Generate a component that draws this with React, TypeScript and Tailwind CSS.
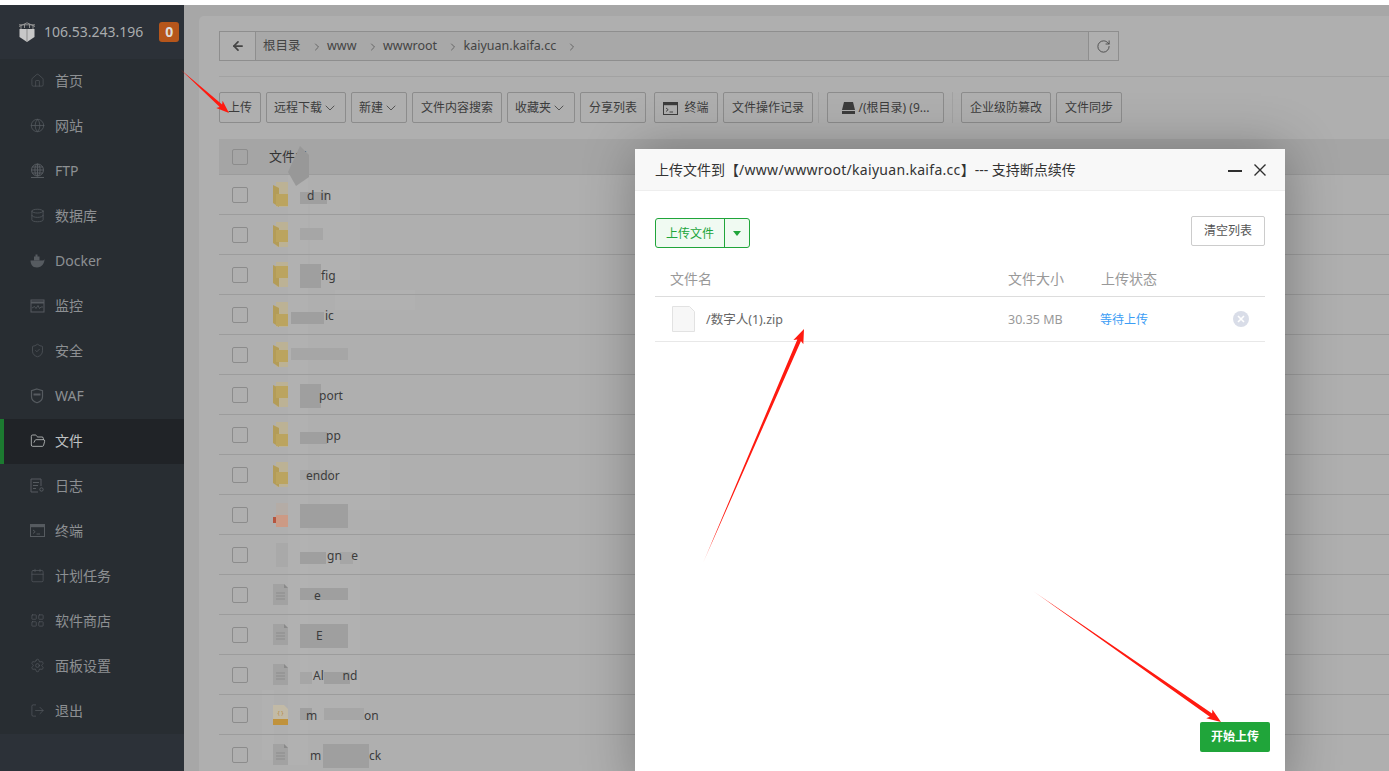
import {
  ArrowLeft,
  Calendar,
  ChevronDown,
  ChevronRight,
  Database,
  FolderOpen,
  Globe,
  Home,
  LayoutGrid,
  LogOut,
  RotateCw,
  Settings,
  ShieldCheck,
} from "lucide-react";

const font = { fontFamily: '"Noto Sans", "Noto Sans CJK SC", sans-serif' };

function FtpIcon() {
  return (
    <svg width="15" height="16" viewBox="0 0 15 16" fill="none" stroke="currentColor" strokeWidth="1">
      <circle cx="7.5" cy="7" r="6" />
      <ellipse cx="7.5" cy="7" rx="2.6" ry="6" />
      <path d="M1.5 7h12M2 4h11M2 10h11M7.5 1v12M1 14.5h13" />
    </svg>
  );
}

function DockerIcon() {
  return (
    <svg width="15" height="15" viewBox="0 0 15 15" fill="currentColor">
      <path d="M.5 7.500h12.500c.8 0 1.400-1 1.500-2 .3 4.500-2.500 9-7.500 9S.7 11 .5 7.500z" />
      <path d="M4 7.500V3.500h1.500V1.500h2v2H9.500v4z" />
    </svg>
  );
}

function MonitorIcon() {
  return (
    <svg width="15" height="14" viewBox="0 0 15 14" fill="none" stroke="currentColor">
      <rect x="1" y="1" width="13" height="12" />
      <path d="M1 3.500h13" strokeWidth="2" />
      <path d="M2 9l2.500-1.500 1.500 2 2-3 1.500 3 1.500-1.500h2" strokeWidth=".8" />
    </svg>
  );
}

function WafIcon() {
  return (
    <svg width="14" height="16" viewBox="0 0 14 16" fill="none" stroke="currentColor" strokeWidth="1.200">
      <path d="M7 1l5.500 1.800v6c0 3-2.500 5-5.500 6-3-1-5.500-3-5.500-6v-6z" />
      <path d="M3.500 6.500h7" strokeWidth="2" />
    </svg>
  );
}

function LogIcon() {
  return (
    <svg width="14" height="15" viewBox="0 0 14 15" fill="none" stroke="currentColor">
      <path d="M11 8V1H1v13h7" />
      <path d="M3 4.500h6M3 7.500h5M3 10.500h3" />
      <circle cx="11.500" cy="11.500" r="1.700" />
    </svg>
  );
}

function TerminalIcon({ className = "" }: { className?: string }) {
  return (
    <svg className={className} width="15" height="13" viewBox="0 0 15 13" fill="none" stroke="currentColor">
      <rect x=".5" y=".5" width="14" height="12" />
      <path d="M.5 2h14" strokeWidth="2.400" />
      <path d="M3 6l2.200 1.700L3 9.500M6.500 10h3.500" strokeWidth=".9" />
    </svg>
  );
}

const menu = [
  { label: "首页", icon: <Home size={15} strokeWidth={1} /> },
  { label: "网站", icon: <Globe size={15} strokeWidth={1.2} /> },
  { label: "FTP", icon: <FtpIcon /> },
  { label: "数据库", icon: <Database size={15} strokeWidth={1.2} /> },
  { label: "Docker", icon: <DockerIcon /> },
  { label: "监控", icon: <MonitorIcon /> },
  { label: "安全", icon: <ShieldCheck size={15} strokeWidth={1.1} /> },
  { label: "WAF", icon: <WafIcon /> },
  { label: "文件", icon: <FolderOpen size={16} strokeWidth={1.2} />, active: true },
  { label: "日志", icon: <LogIcon /> },
  { label: "终端", icon: <TerminalIcon /> },
  { label: "计划任务", icon: <Calendar size={15} strokeWidth={1.1} /> },
  { label: "软件商店", icon: <LayoutGrid size={15} strokeWidth={1.1} /> },
  { label: "面板设置", icon: <Settings size={15} strokeWidth={1.1} /> },
  { label: "退出", icon: <LogOut size={15} strokeWidth={1.1} /> },
];

const crumbs = ["根目录", "www", "wwwroot", "kaiyuan.kaifa.cc"];

type Row = {
  name: string;
  x: number;
  kind: "folder" | "file" | "red" | "json" | "none";
  gold?: number;
};

// x is where the part of the name that is still readable starts on the page
const rows: Row[] = [
  { name: "d  in", x: 307, kind: "folder", gold: 12 },
  { name: "", x: 300, kind: "folder", gold: 8 },
  { name: "fig", x: 321, kind: "folder", gold: 4 },
  { name: "ic", x: 325, kind: "folder", gold: 12 },
  { name: "", x: 300, kind: "folder", gold: 8 },
  { name: "port", x: 319, kind: "folder", gold: 4 },
  { name: "pp", x: 326, kind: "folder", gold: 12 },
  { name: "endor", x: 306, kind: "folder", gold: 10 },
  { name: "", x: 300, kind: "red" },
  { name: "gn   e", x: 327, kind: "none" },
  { name: "e", x: 314, kind: "file" },
  { name: "E", x: 316, kind: "file" },
  { name: "Al      nd", x: 313, kind: "file" },
  { name: "m", x: 306, kind: "json" },
  { name: "m", x: 310, kind: "file" },
];

const tails: Record<number, { text: string; x: number }> = {
  13: { text: "on", x: 364 },
  14: { text: "ck", x: 369 },
};

// pixel mosaic that was smeared over the file names
const mosaic = [
  [300, 192, 27, 12], [300, 228, 23, 12], [300, 264, 21, 24], [291, 312, 33, 12],
  [291, 348, 57, 12], [300, 384, 21, 24], [300, 432, 27, 12], [300, 470, 32, 10],
  [300, 504, 48, 24], [300, 552, 26, 12], [340, 552, 13, 12], [300, 588, 48, 12],
  [300, 624, 48, 24], [300, 672, 12, 12], [324, 672, 26, 12], [300, 708, 12, 12],
  [324, 708, 40, 12], [323, 744, 46, 24],
];

const smear = [
  [288, 175, 20, 590], [310, 190, 50, 90], [335, 290, 80, 20], [320, 450, 70, 60],
  [300, 530, 60, 200], [262, 690, 12, 70],
];

function FileGlyph({ kind, gold = 8 }: { kind: Row["kind"]; gold?: number }) {
  if (kind === "none") {
    return (
      <svg className="shrink-0" width="15" height="24" viewBox="0 0 15 24">
        <rect x="3" y="0" width="12" height="24" fill="#a9a9a9" />
      </svg>
    );
  }
  if (kind === "folder") {
    return (
      <svg className="shrink-0" width="15" height="25" viewBox="0 0 15 25">
        <rect x="3" y="0" width="12" height="25" fill="#bcb295" />
        <path d="M0 3l6 3v19L0 21z" fill="#b39c58" />
        <rect x="3" y={gold} width="12" height="12" fill="#bba45f" />
      </svg>
    );
  }
  if (kind === "red") {
    return (
      <svg className="shrink-0" width="15" height="24" viewBox="0 0 15 24">
        <rect x="3" y="0" width="12" height="12" fill="#b4aca6" />
        <rect x="0" y="14" width="5" height="6" fill="#b5553f" />
        <rect x="3" y="12" width="12" height="12" fill="#cc9a85" />
      </svg>
    );
  }
  if (kind === "json") {
    return (
      <svg className="shrink-0" width="15" height="20" viewBox="0 0 15 20">
        <path d="M0 0h11l4 4v16H0z" fill="#c2baa6" />
        <path d="M0 14h15v6H0z" fill="#c0923c" />
        <text x="7.500" y="10" textAnchor="middle" fontSize="6" fill="#b88a40">{"{ }"}</text>
      </svg>
    );
  }
  return (
    <svg className="shrink-0" width="15" height="21" viewBox="0 0 15 21">
      <path d="M0 0h11l4 4v17H0z" fill="#a2a2a2" />
      <path d="M11 0l4 4h-4z" fill="#8a8a8a" />
      <path d="M3 9h9M3 12h9M3 15h9" stroke="#8c8c8c" />
    </svg>
  );
}

function ToolButton({
  w,
  children,
}: {
  w: string;
  children: React.ReactNode;
}) {
  return (
    <button className={`flex h-[31px] shrink-0 items-center justify-center rounded-[2px] border border-[#8c8c8c] bg-[#afafaf] pt-px text-xs whitespace-nowrap text-[#3c3c3c] ${w}`}>
      {children}
    </button>
  );
}

function RedArrow({
  id,
  x1,
  y1,
  x2,
  y2,
  w,
}: {
  id: string;
  x1: number;
  y1: number;
  x2: number;
  y2: number;
  w: number;
}) {
  const len = Math.hypot(x2 - x1, y2 - y1);
  const ux = (x2 - x1) / len;
  const uy = (y2 - y1) / len;
  const nx = -uy;
  const ny = ux;
  const head = w * 3.4;
  const bx = x2 - ux * head;
  const by = y2 - uy * head;
  const pt = (x: number, y: number) => `${x},${y}`;
  const points = [
    pt(x1, y1),
    pt(bx + nx * w * 0.55, by + ny * w * 0.55),
    pt(bx - ux * 2 + nx * w * 1.5, by - uy * 2 + ny * w * 1.5),
    pt(x2, y2),
    pt(bx - ux * 2 - nx * w * 1.5, by - uy * 2 - ny * w * 1.5),
    pt(bx - nx * w * 0.55, by - ny * w * 0.55),
  ].join(" ");
  return (
    <>
      <defs>
        <linearGradient id={id} gradientUnits="userSpaceOnUse" x1={x1} y1={y1} x2={x2} y2={y2}>
          <stop offset="0" stopColor="#ff1a10" stopOpacity="0.3" />
          <stop offset="0.1" stopColor="#ff1a10" />
          <stop offset="1" stopColor="#ff1a10" />
        </linearGradient>
      </defs>
      <polygon points={points} fill={`url(#${id})`} />
    </>
  );
}

export default function App() {
  return (
    <div className="relative flex h-[771px] w-[1389px] flex-col overflow-hidden bg-white" style={font}>
      <div className="h-[5px] shrink-0 bg-white" />
      <div className="flex min-h-0 flex-1">
        {/* Sidebar */}
        <aside className="flex w-[184px] shrink-0 flex-col bg-[#2c3138]">
          <div className="flex h-[54px] shrink-0 items-center pl-[18px]">
            <svg width="18" height="20" viewBox="0 0 18 20" className="shrink-0 text-[#c8c8c8]">
              <path d="M1 4.500L9 .8l8 3.700M3 3v4M6.500 2v4M11.500 2v4M15 3v4M1 2.800h16" fill="none" stroke="#9a9a9a" strokeWidth=".9" />
              <path d="M1.500 7h15v8L9 20l-7.500-5z" fill="currentColor" />
              <path d="M9 7v13" stroke="#8f8f8f" />
            </svg>
            <span className="ml-2 text-sm whitespace-nowrap text-[#a9acae]">106.53.243.196</span>
            <span className="ml-4 flex h-5 w-5 items-center justify-center rounded-[3px] bg-[#b6561b] text-sm font-bold text-[#ddd]">0</span>
          </div>
          <nav className="flex flex-col bg-[#282d32]">
            {menu.map((item) => (
              <div
                key={item.label}
                className={`flex h-[45px] items-center border-l-4 pb-[2px] pl-[26px] text-sm ${
                  item.active
                    ? "border-[#1c7a30] bg-[#202327] text-[#bfc1c2]"
                    : "border-transparent text-[#8d9093]"
                }`}
              >
                <span className={`flex w-[25px] shrink-0 ${item.active ? "text-[#c4c6c7]" : "text-[#565b60]"}`}>
                  {item.icon}
                </span>
                {item.label}
              </div>
            ))}
          </nav>
        </aside>

        {/* Main */}
        <main className="min-w-0 flex-1 bg-[#a7a7a7] pt-[11px] pl-[15px]">
          <div className="relative h-[800px] rounded-tl-[5px] bg-[#afafaf] pt-[15px] pl-5">
            <div className="flex h-[30px] w-[900px] items-stretch border border-[#8e8e8e]">
              <div className="flex w-9 shrink-0 items-center justify-center border-r border-[#8e8e8e]">
                <ArrowLeft size={14} strokeWidth={3} className="text-[#444]" />
              </div>
              <div className="flex flex-1 items-center gap-[4.5px] bg-[#a8a8a8] pt-px pl-[7px] text-[12.5px] text-[#444]">
                {crumbs.map((c) => (
                  <span key={c} className="flex items-center gap-2.5">
                    {c}
                    <ChevronRight size={12} strokeWidth={2} className="text-[#666]" />
                  </span>
                ))}
              </div>
              <div className="flex w-[30px] shrink-0 items-center justify-center border-l border-[#8e8e8e]">
                <RotateCw size={15} strokeWidth={1.4} className="text-[#444]" />
              </div>
            </div>
            <div className="mt-[15px] h-px bg-[#a2a2a2]" />
            <div className="mt-[15px] flex items-center">
              <div className="flex gap-[5px]">
                <ToolButton w="w-[42px]">上传</ToolButton>
                <ToolButton w="w-[80px]">远程下载<ChevronDown size={16} strokeWidth={1.2} /></ToolButton>
                <ToolButton w="w-[56px]">新建<ChevronDown size={16} strokeWidth={1.2} /></ToolButton>
                <ToolButton w="w-[90px]">文件内容搜索</ToolButton>
                <ToolButton w="w-[68px]">收藏夹<ChevronDown size={16} strokeWidth={1.2} /></ToolButton>
                <ToolButton w="w-[66px]">分享列表</ToolButton>
              </div>
              <div className="ml-2 flex gap-[5px]">
                <ToolButton w="w-[64px]"><TerminalIcon className="mr-1.5 text-[#3c3c3c]" />终端</ToolButton>
                <ToolButton w="w-[90px]">文件操作记录</ToolButton>
              </div>
              <div className="mr-2 ml-[5px] h-[31px] w-px bg-[#a2a2a2]" />
              <ToolButton w="w-[117px]">
                <svg width="13" height="12" viewBox="0 0 13 12" className="mr-1 text-[#3c3c3c]" fill="currentColor">
                  <path d="M2 0h9l2 8H0z" />
                  <rect y="9" width="13" height="3" />
                </svg>
                /(根目录) (9...
              </ToolButton>
              <div className="mx-2 h-[31px] w-px bg-[#a2a2a2]" />
              <div className="flex gap-[5px]">
                <ToolButton w="w-[90px]">企业级防篡改</ToolButton>
                <ToolButton w="w-[66px]">文件同步</ToolButton>
              </div>
            </div>

            {/* Smudges sit under the table text, so the leftover letters stay readable */}
            <svg className="pointer-events-none absolute top-[-16px] left-[-199px]" width="1389" height="787">
              {smear.map(([x, y, w, h], i) => (
                <rect key={i} x={x} y={y} width={w} height={h} fill="#b3b3b3" opacity=".5" />
              ))}
              {mosaic.map(([x, y, w, h], i) => (
                <rect key={i} x={x} y={y} width={w} height={h} fill={i % 3 === 1 ? "#a6a6a6" : "#9f9f9f"} />
              ))}
            </svg>

            {/* File table */}
            <div className="relative mt-4 w-[1170px]">
              <div className="flex h-[35px] items-center bg-[#a5a5a5] pl-[13px] text-[13px] text-[#333]">
                <span className="h-4 w-4 rounded-[2px] border border-[#8c8c8c]" />
                <span className="ml-[21px]">文件名</span>
              </div>
              {rows.map((r, i) => (
                <div key={i} className="relative flex h-10 items-center border-t border-[#9c9c9c] pl-[13px] text-xs text-[#3c3c3c]">
                  <span className="h-4 w-4 shrink-0 rounded-[2px] border border-[#8c8c8c]" />
                  <span className="ml-[25px] flex w-[15px] shrink-0"><FileGlyph kind={r.kind} gold={r.gold} /></span>
                  <span className="pt-[2px] whitespace-pre" style={{ marginLeft: r.x - 288 }}>{r.name}</span>
                  {tails[i] && (
                    <span className="absolute pt-[2px]" style={{ left: tails[i].x - 219 }}>{tails[i].text}</span>
                  )}
                </div>
              ))}
            </div>
          </div>
        </main>
      </div>

      {/* Smudge across the table heading */}
      <svg className="pointer-events-none absolute inset-0" width="1389" height="771">
        <polygon points="300,146 309,155 309,177 296,186 288,172" fill="#989898" />
      </svg>

      {/* Upload dialog */}
      <div className="absolute top-[149px] left-[635px] flex h-[640px] w-[650px] flex-col bg-white shadow-[1px_1px_50px_rgba(0,0,0,0.3)]">
        <div className="flex h-[42px] shrink-0 items-center border-b border-[#eee] bg-[#f8f8f8] pr-[19px] pl-5 text-sm text-[#333]">
          <span className="flex-1 whitespace-nowrap">上传文件到【<span className="tracking-[0.3px]">/www/wwwroot/kaiyuan.kaifa.cc</span>】--- 支持断点续传</span>
          <span className="mt-0.5 mr-3 h-0.5 w-3.5 bg-[#2f2f2f]" />
          <svg width="12" height="12" viewBox="0 0 12 12" stroke="#2f2f2f" strokeWidth="1.400">
            <path d="M.5.500l11 11M11.500.500l-11 11" />
          </svg>
        </div>
        <div className="flex items-start justify-between px-5 pt-[25px]">
          <div className="mt-[2px] flex h-[30px] w-[95px] rounded-[3px] border border-[#20a53a] bg-[#f0faf2] text-xs text-[#20a53a]">
            <span className="flex w-[69px] items-center justify-center border-r border-[#20a53a] pt-[2px]">上传文件</span>
            <span className="flex flex-1 items-center justify-center">
              <svg width="8" height="5" viewBox="0 0 8 5" fill="#20a53a"><path d="M0 0h8L4 5z" /></svg>
            </span>
          </div>
          <button className="flex h-[30px] w-[74px] items-center justify-center rounded-[2px] border border-[#ccc] text-xs text-[#555]">清空列表</button>
        </div>
        <div className="mx-5 mt-4 flex h-[33px] items-center border-b border-[#ddd] pb-[2px] text-sm text-[#999]">
          <span className="w-[338px] pl-[15px]">文件名</span>
          <span className="w-[108px] pl-[15px] whitespace-nowrap">文件大小</span>
          <span>上传状态</span>
        </div>
        <div className="mx-5 flex h-[45px] items-center border-b border-[#e8e8e8] text-[12.5px]">
          <svg className="ml-[17px] shrink-0" width="23" height="26" viewBox="0 0 23 26">
            <path d="M.5.500h17l5 5v20H.5z" fill="#f7f7f7" stroke="#e2e2e2" />
          </svg>
          <span className="ml-[11px] w-[302px] pt-[2px] text-[#666]">/数字人(1).zip</span>
          <span className="w-[92px] pt-[2px] text-[#999]">30.35 MB</span>
          <span className="w-[133px] pt-[2px] text-xs text-[#3b9df5]">等待上传</span>
          <svg width="16" height="16" viewBox="0 0 16 16">
            <circle cx="8" cy="8" r="8" fill="#d9dde8" />
            <path d="M5 5l6 6M11 5l-6 6" stroke="#fff" strokeWidth="1.600" />
          </svg>
        </div>
      </div>
      <button className="absolute top-[722px] left-[1200px] flex h-[30px] w-[70px] items-center justify-center rounded-[2px] bg-[#20a53a] text-xs font-bold text-white">开始上传</button>

      {/* Annotation arrows */}
      <svg className="pointer-events-none absolute inset-0" width="1389" height="771">
        <RedArrow id="a1" x1={180} y1={69} x2={229} y2={113} w={3.2} />
        <RedArrow id="a2" x1={703} y1={563} x2={804} y2={329} w={3.6} />
        <RedArrow id="a3" x1={1033} y1={591} x2={1221} y2={722} w={3.6} />
      </svg>
    </div>
  );
}
